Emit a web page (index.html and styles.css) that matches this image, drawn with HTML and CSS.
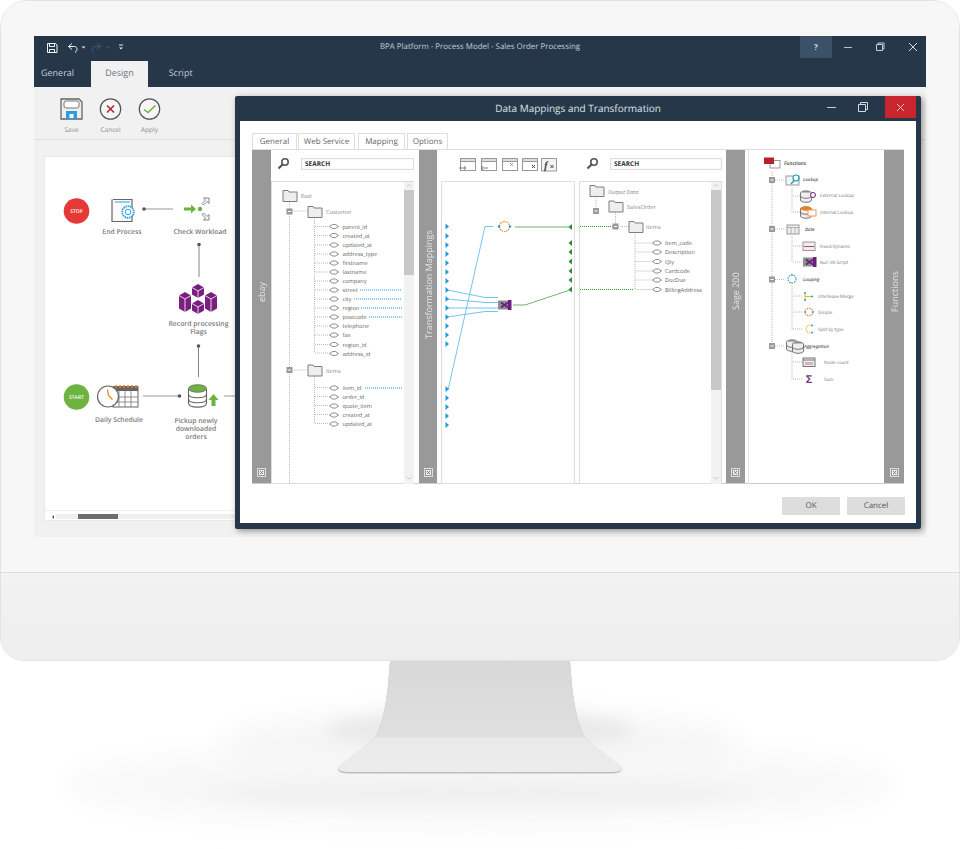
FILE: index.html
```html
<!DOCTYPE html>
<html lang="en">

<head>
    <meta charset="UTF-8">
    <meta name="viewport" content="width=device-width, initial-scale=1.0">
    <title>BPA Platform - Process Model</title>
    <link rel="stylesheet" href="styles.css">
</head>

<body>
    <!-- shared little icons -->
    <svg class="defs" aria-hidden="true">
        <defs>
            <g id="folder"><path d="M-7 -5.5h5l1 1.5h8v9.5h-14z" fill="#eee" stroke="#7d7d7d" /></g>
            <g id="leaf"><path d="M-4.5 0L-1.5 -2H1.5L4.5 0L1.5 2H-1.5Z" fill="#fff" stroke="#8a8a8a" /></g>
            <g id="minus"><rect x="-3" y="-3" width="6" height="6" fill="#999" /><path d="M-1.6 0H1.6" stroke="#fff" /></g>
            <polygon id="in" points="-1.5,-3 2,0 -1.5,3" fill="#1c9be0" />
            <polygon id="out" points="2,-3 -1.5,0 2,3" fill="#2e8b2e" />
            <g id="vb"><rect x="-7" y="-4.5" width="12" height="9" fill="#8f8f8f" /><path d="M-4 -2.5L3 2.5M-4 2.5L3 -2.5" stroke="#6c1f80" stroke-width="1.6" /><rect x="3" y="-5" width="3.5" height="10" fill="#6c1f80" /></g>
            <g id="cube"><path d="M0 -7L6 -3.5V3.5L0 7L-6 3.5V-3.5Z" fill="#7a1f80" /><path d="M-6 -3.5L0 0L6 -3.5M0 0V7" fill="none" stroke="#fff" stroke-width=".8" /></g>
            <g id="win"><rect x=".5" y=".5" width="15" height="12" fill="#fff" stroke="#999" /><rect x=".5" y=".5" width="15" height="3" fill="#ddd" stroke="#999" /></g>
            <g id="lens"><circle cx="2" cy="-2" r="3.2" fill="none" stroke="#555" stroke-width="1.6" /><path d="M0 0L-4.5 4.5" stroke="#555" stroke-width="2.2" /></g>
            <g id="db"><ellipse cx="0" cy="-3.5" rx="5.5" ry="2.2" fill="#8c8c8c" /><path d="M-5.5 -3.5V4c0 3 11 3 11 0V-3.5" fill="#eee" stroke="#777" /><path d="M-5.5 0c0 3 11 3 11 0" fill="none" stroke="#777" /></g>
            <g id="pin"><rect x=".5" y=".5" width="8" height="8" fill="none" stroke="#ddd" /><rect x="2" y="2" width="5" height="5" fill="#eee" /><path d="M3 3l3 3M6 3l-3 3" stroke="#666" stroke-width=".8" /></g>
        </defs>
    </svg>

    <div class="monitor">
        <div class="bezel">
            <div class="screen">
                <header class="titlebar">
                    <svg class="qat" width="100" height="25" viewBox="34 36 100 25">
                        <g fill="none" stroke="#f1f4f7">
                            <path d="M47.500 43.500h8l1.500 1.500v7.500h-9.500z" />
                            <path d="M49.500 43.500v3h5v-3M49.500 52.500v-3h5v3" />
                            <path d="M72 43.500l-3.500 3 3.500 3M68.500 46.500h6c3 0 3.500 4 0.500 6" />
                        </g>
                        <path d="M81.500 46.500h4l-2 2z" fill="#e6eaee" />
                        <path d="M97 43.500l3.500 3 -3.500 3M100.500 46.500h-6c-3 0 -3.500 4 -0.500 6" fill="none" stroke="#46586a" />
                        <path d="M105.500 46.500h4l-2 2z" fill="#46586a" />
                        <path d="M119 45h4" stroke="#e6eaee" /><path d="M119 47.500h4l-2 2z" fill="#e6eaee" />
                    </svg>
                    <div class="app-title">BPA Platform - Process Model - Sales Order Processing</div>
                    <div class="win-btns">
                        <div class="win-btn win-help">?</div>
                        <div class="win-btn"><svg width="10" height="10"><path d="M1 5.500h8" stroke="#b9c1c9" /></svg></div>
                        <div class="win-btn"><svg width="10" height="10"><path d="M1.500 2.500h6v6h-6zM3 2.500V1h6v6H7.500" fill="none" stroke="#c5ccd3" /></svg></div>
                        <div class="win-btn win-x"><svg width="10" height="10"><path d="M1 1l8 8M9 1l-8 8" stroke="#d5dae0" /></svg></div>
                    </div>
                </header>
                <nav class="app-tabs">
                    <div class="app-tab">General</div>
                    <div class="app-tab app-tab-on">Design</div>
                    <div class="app-tab app-tab-last">Script</div>
                </nav>
                <div class="toolbar">
                    <div class="tool">
                        <svg width="23" height="24" viewBox="0 0 23 24">
                            <path d="M1 2h18l3 3v17H1z" fill="#eee" stroke="#666" stroke-width="1.300" />
                            <rect x="4" y="4" width="15" height="7" rx="2" fill="#fff" stroke="#777" />
                            <rect x="6" y="14" width="11" height="8" fill="#2a9fe0" /><rect x="9.500" y="17" width="4" height="4" fill="#fff" />
                        </svg>
                        <span>Save</span>
                    </div>
                    <div class="tool">
                        <svg width="23" height="24" viewBox="0 0 23 24">
                            <circle cx="11.500" cy="12" r="10.200" fill="#f6f6f6" stroke="#555" stroke-width="1.200" />
                            <path d="M8 8.500l7 7M15 8.500l-7 7" stroke="#b5202a" stroke-width="1.500" />
                        </svg>
                        <span>Cancel</span>
                    </div>
                    <div class="tool">
                        <svg width="23" height="24" viewBox="0 0 23 24">
                            <circle cx="11.500" cy="12" r="10.200" fill="#f6f6f6" stroke="#555" stroke-width="1.200" />
                            <path d="M6 12.500l4 3l7.500 -7" fill="none" stroke="#6db33f" stroke-width="1.500" />
                        </svg>
                        <span>Apply</span>
                    </div>
                </div>
                <div class="canvas">
                    <!-- process diagram, drawn in screen coordinates -->
                    <svg class="diagram" width="866" height="352" viewBox="44 156 866 352">
                        <circle cx="75.500" cy="210" r="12.800" fill="#e53935" />
                        <text class="badge" x="75.500" y="212">STOP</text>

                        <path d="M112 198.500h19v22h-20v-22" fill="#fafafa" stroke="#666" stroke-width="1.200" />
                        <path d="M114 201h15" stroke="#2a9fe0" />
                        <circle cx="127" cy="211" r="5.800" fill="#fff" stroke="#2a9fe0" stroke-width="1.800" stroke-dasharray="1.500 .7" />
                        <circle cx="127" cy="211" r="2.800" fill="none" stroke="#2a9fe0" />
                        <text class="node" x="121" y="233">End Process</text>

                        <path d="M143 208H172" stroke="#999" />
                        <circle cx="143" cy="208" r="1.800" fill="#555" />
                        <path d="M183 206.500h7v-3l5 4.500l-5 4.500v-3h-7z" fill="#6db33f" />
                        <circle cx="199" cy="208" r="2.200" fill="#6db33f" />
                        <path d="M202.500 197H208V202.500L206 200.500L202.500 204L201 202.500L204.500 199ZM202.500 219H208V213.500L206 215.500L202.500 212L201 213.500L204.500 217Z" fill="#fff" stroke="#666" stroke-width=".8" />
                        <text class="node" x="199" y="233">Check Workload</text>

                        <path d="M198 243V276" stroke="#888" />
                        <circle cx="198" cy="243.500" r="1.800" fill="#555" />
                        <use href="#cube" x="197" y="306" />
                        <use href="#cube" x="184" y="304" />
                        <use href="#cube" x="210" y="304" />
                        <use href="#cube" x="184" y="298" />
                        <use href="#cube" x="210" y="298" />
                        <use href="#cube" x="197" y="290" />
                        <text class="node" x="197.500" y="324.500">Record processing</text>
                        <text class="node" x="197.500" y="333">Flags</text>

                        <path d="M197.500 345V376" stroke="#888" />
                        <circle cx="197.500" cy="345" r="1.800" fill="#555" />

                        <circle cx="75.500" cy="396" r="12.800" fill="#6db33f" />
                        <text class="badge" x="75.500" y="398">START</text>

                        <rect x="112" y="386" width="25" height="20" fill="#fff" stroke="#666" />
                        <rect x="112" y="385" width="25" height="5" fill="#666" />
                        <path d="M115 384v3M119 384v3M123 384v3M127 384v3M131 384v3M135 384v3" stroke="#ee7b22" stroke-width="1.500" />
                        <path d="M112 396h25M112 401h25M118 390v16M124 390v16M130 390v16" stroke="#777" stroke-width=".8" />
                        <circle cx="107" cy="395.500" r="10.500" fill="#fff" stroke="#666" stroke-width="1.200" />
                        <path d="M106.500 388.500l1 6l4 4" fill="none" stroke="#ee7b22" stroke-width="1.200" />
                        <text class="node" x="118" y="421">Daily Schedule</text>

                        <path d="M142 395H178" stroke="#999" />
                        <circle cx="178.500" cy="395" r="1.800" fill="#555" />
                        <path d="M187.500 388V402c0 5.500 18 5.500 18 0V388" fill="#fff" stroke="#666" stroke-width="1.100" />
                        <path d="M187.500 393c0 5 18 5 18 0M187.500 398c0 5 18 5 18 0" fill="none" stroke="#666" stroke-width="1.100" />
                        <ellipse cx="196.500" cy="387.500" rx="9" ry="3.800" fill="#6db33f" stroke="#666" stroke-width=".8" />
                        <path d="M212.500 393l5 6h-3v6h-4v-6h-3z" fill="#6db33f" />
                        <text class="node" x="195" y="422">Pickup newly</text>
                        <text class="node" x="195" y="430">downloaded</text>
                        <text class="node" x="195" y="438">orders</text>

                        <path d="M223 395H235" stroke="#999" />
                    </svg>
                    <div class="hscroll">
                        <div class="hscroll-arrow"></div>
                        <div class="hscroll-track">
                            <div class="hscroll-thumb"></div>
                        </div>
                    </div>
                </div>

                <!-- Data mappings dialog -->
                <div class="dialog">
                    <div class="dialog-top">
                        <div></div>
                        <div class="dialog-title">Data Mappings and Transformation</div>
                        <div class="dialog-btns">
                            <div class="dialog-btn"><svg width="10" height="10"><path d="M0 5.500h9" stroke="#c5ccd3" /></svg></div>
                            <div class="dialog-btn"><svg width="10" height="10"><path d="M.5 2.500h7v7h-7zM2.500 2.500V.5h7v7H7.500" fill="none" stroke="#d5dae0" /></svg></div>
                            <div class="dialog-btn dialog-close"><svg width="9" height="9"><path d="M1 1l7 7M8 1l-7 7" stroke="#f0c8ca" /></svg></div>
                        </div>
                    </div>
                    <div class="dialog-body">
                        <div class="dlg-tabs">
                            <div class="dlg-tab dlg-tab-general">General</div>
                            <div class="dlg-tab dlg-tab-web">Web Service</div>
                            <div class="dlg-tab dlg-tab-map">Mapping</div>
                            <div class="dlg-tab dlg-tab-opt">Options</div>
                        </div>
                        <div class="panel">
                            <div class="bar bar-a">
                                <div class="bar-label">ebay</div>
                                <svg class="bar-pin" width="9" height="9"><use href="#pin" /></svg>
                            </div>
                            <div class="pane pane-left">
                                <div class="search-row">
                                    <svg class="lens" width="14" height="14" viewBox="-6 -7 14 14"><use href="#lens" /></svg>
                                    <div class="search">SEARCH</div>
                                </div>
                                <svg class="list" width="143" height="303" viewBox="271 181 143 303">
                                    <rect x="404" y="182" width="10" height="302" fill="#f2f2f2" />
                                    <rect x="404" y="190" width="10" height="85" fill="#c8c8c8" />
                                    <path d="M406.500 186.500l2.500 -2l2.500 2M406.500 477l2.500 2l2.500 -2" fill="none" stroke="#ccc" />
                                    <path class="dots" d="M289.500 202V484M292.500 211H307M314.500 217V353M315 226.500H329M315 235.500H329M315 245H329M315 254H329M315 263H329M315 272H329M315 281H329M315 290H329M315 299H329M315 308H329M315 317H329M315 326H329M315 335H329M315 344.500H329M315 353H329M292.500 370H307M314.500 376V423M315 387.500H329M315 396.500H329M315 405.500H329M315 414.500H329M315 423.500H329" />
                                    <path class="dots-blue" d="M360 290H402M354 299H402M361 308H402M369 317H402M365 388H402" />
                                    <use href="#folder" x="290" y="196" />
                                    <text class="t-i" x="300.500" y="198">Root</text>
                                    <use href="#minus" x="289.500" y="211.500" />
                                    <use href="#folder" x="315" y="212" />
                                    <text class="t-f" x="326" y="214">Customer</text>
                                    <use href="#leaf" x="334" y="226.500" /><text class="t" x="342.500" y="229">parent_id</text>
                                    <use href="#leaf" x="334" y="235.500" /><text class="t" x="342.500" y="238">created_at</text>
                                    <use href="#leaf" x="334" y="245" /><text class="t" x="342.500" y="247">updated_at</text>
                                    <use href="#leaf" x="334" y="254" /><text class="t" x="342.500" y="256">address_type</text>
                                    <use href="#leaf" x="334" y="263" /><text class="t" x="342.500" y="265">firstname</text>
                                    <use href="#leaf" x="334" y="272" /><text class="t" x="342.500" y="274">lastname</text>
                                    <use href="#leaf" x="334" y="281" /><text class="t" x="342.500" y="283">company</text>
                                    <use href="#leaf" x="334" y="290" /><text class="t" x="342.500" y="292">street</text>
                                    <use href="#leaf" x="334" y="299" /><text class="t" x="342.500" y="301">city</text>
                                    <use href="#leaf" x="334" y="308" /><text class="t" x="342.500" y="310">region</text>
                                    <use href="#leaf" x="334" y="317" /><text class="t" x="342.500" y="319">postcode</text>
                                    <use href="#leaf" x="334" y="326" /><text class="t" x="342.500" y="328">telephone</text>
                                    <use href="#leaf" x="334" y="335" /><text class="t" x="342.500" y="337">fax</text>
                                    <use href="#leaf" x="334" y="344.500" /><text class="t" x="342.500" y="347">region_id</text>
                                    <use href="#leaf" x="334" y="353.500" /><text class="t" x="342.500" y="356">address_id</text>
                                    <use href="#minus" x="289.500" y="370" />
                                    <use href="#folder" x="315" y="370.500" />
                                    <text class="t-f" x="326" y="373">Items</text>
                                    <use href="#leaf" x="334" y="388" /><text class="t" x="342.500" y="389.500">item_id</text>
                                    <use href="#leaf" x="334" y="397" /><text class="t" x="342.500" y="398.500">order_id</text>
                                    <use href="#leaf" x="334" y="406" /><text class="t" x="342.500" y="407.500">quote_item</text>
                                    <use href="#leaf" x="334" y="415" /><text class="t" x="342.500" y="416.500">created_at</text>
                                    <use href="#leaf" x="334" y="424" /><text class="t" x="342.500" y="425.500">updated_at</text>
                                </svg>
                            </div>
                            <div class="bar bar-b">
                                <div class="bar-label bar-label-wide">Transformation Mappings</div>
                                <svg class="bar-pin" width="9" height="9"><use href="#pin" /></svg>
                            </div>
                            <div class="pane-mid">
                                <div class="pane pane-center">
                                    <svg class="tools" width="134" height="32" viewBox="441 149 134 32">
                                        <use href="#win" x="460" y="158" /><path d="M459 168h7l-2 -2M466 168l-2 2" fill="none" stroke="#666" stroke-width=".8" />
                                        <use href="#win" x="481" y="158" /><path d="M488 168h-7l2 -2M481 168l2 2" fill="none" stroke="#666" stroke-width=".8" />
                                        <use href="#win" x="502" y="158" /><path d="M510 163l3 3M513 163l-3 3" stroke="#888" stroke-width=".8" />
                                        <use href="#win" x="522" y="158" /><path d="M532 165l3 3M535 165l-3 3" stroke="#444" />
                                        <rect x="541.500" y="158.500" width="15" height="12.500" fill="#f4f4f4" stroke="#999" />
                                        <text class="fx" x="544" y="168.500">f</text>
                                        <path d="M550.500 165l3 3M553.500 165l-3 3" stroke="#444" />
                                    </svg>
                                    <svg class="list" width="134" height="303" viewBox="441 181 134 303">
                                        <g stroke-width=".8" fill="none">
                                            <path stroke="#55b4e8" d="M485 226.500H493M485 226.500L448 390M447 290L485 297.500H498M447 299L485 302.500H498M447 308H498M447 317L485 311.500H498" />
                                            <path stroke="#4a9e4a" d="M515 227H570M513 305H525L570 290" />
                                        </g>
                                        <circle cx="504.500" cy="226.500" r="5" fill="#fff" stroke="#ee7b22" stroke-width="1.200" stroke-dasharray="1.300 1" />
                                        <circle cx="499" cy="226.500" r="1.200" fill="#1c9be0" /><circle cx="510" cy="226.500" r="1.200" fill="#1c9be0" />
                                        <use href="#vb" x="505" y="305" />
                                        <use href="#in" x="447" y="226.500" /><use href="#in" x="447" y="236" /><use href="#in" x="447" y="245" /><use href="#in" x="447" y="254" /><use href="#in" x="447" y="263" /><use href="#in" x="447" y="272" /><use href="#in" x="447" y="281" /><use href="#in" x="447" y="290" /><use href="#in" x="447" y="299" /><use href="#in" x="447" y="308" /><use href="#in" x="447" y="317" /><use href="#in" x="447" y="326" /><use href="#in" x="447" y="335" /><use href="#in" x="447" y="344" />
                                        <use href="#in" x="447" y="389" /><use href="#in" x="447" y="398" /><use href="#in" x="447" y="407" /><use href="#in" x="447" y="416" /><use href="#in" x="447" y="425" />
                                        <use href="#out" x="570" y="227" /><use href="#out" x="570" y="243" /><use href="#out" x="570" y="252" /><use href="#out" x="570" y="261.500" /><use href="#out" x="570" y="271" /><use href="#out" x="570" y="280" /><use href="#out" x="570" y="289.500" />
                                    </svg>
                                </div>
                                <div class="pane pane-right">
                                    <div class="search-row search-row-right">
                                        <svg class="lens" width="14" height="14" viewBox="-6 -7 14 14"><use href="#lens" /></svg>
                                        <div class="search">SEARCH</div>
                                    </div>
                                    <svg class="list" width="143" height="303" viewBox="579 181 143 303">
                                        <rect x="711" y="182" width="10" height="302" fill="#f2f2f2" />
                                        <rect x="711" y="190" width="10" height="200" fill="#c8c8c8" />
                                        <path d="M713.500 186.500l2.500 -2l2.500 2M713.500 477l2.500 2l2.500 -2" fill="none" stroke="#ccc" />
                                        <path class="dots" d="M596 196V208M615.500 212V224M618 226.500H629M635 232V289.500M635.500 243H652M635.500 252H652M635.500 261.500H652M635.500 271H652M635.500 280H652M635.500 289.500H652" />
                                        <path class="dots-green" d="M580 226.500H613" />
                                        <path class="dots-green" d="M580 289.500H634" />
                                        <use href="#folder" x="597" y="191" />
                                        <text class="t-i" x="608" y="193.500">Output Data</text>
                                        <use href="#minus" x="596" y="211" />
                                        <use href="#folder" x="616" y="206.500" />
                                        <text class="t-f" x="627" y="209">SalesOrder</text>
                                        <use href="#minus" x="615.500" y="226.500" />
                                        <use href="#folder" x="636" y="227" />
                                        <text class="t-f" x="646" y="229">Items</text>
                                        <use href="#leaf" x="657" y="243" /><text class="t" x="665" y="245">Item_code</text>
                                        <use href="#leaf" x="657" y="252" /><text class="t" x="665" y="254">Description</text>
                                        <use href="#leaf" x="657" y="261.500" /><text class="t" x="665" y="264">Qty</text>
                                        <use href="#leaf" x="657" y="271" /><text class="t" x="665" y="273">Cardcode</text>
                                        <use href="#leaf" x="657" y="280" /><text class="t" x="665" y="282">DocDue</text>
                                        <use href="#leaf" x="657" y="289.500" /><text class="t" x="665" y="292">BillingAddress</text>
                                    </svg>
                                </div>
                            </div>
                            <div class="bar bar-a">
                                <div class="bar-label">Sage 200</div>
                                <svg class="bar-pin" width="9" height="9"><use href="#pin" /></svg>
                            </div>
                            <div class="pane pane-fn">
                                <svg width="134" height="334" viewBox="750 149 134 334">
                                    <path class="dots" d="M773 170V345M776 179H786M793 186V211M794 195H803M794 211H803M776 228H786M793 235V261M794 245H803M794 261H803M776 278.500H786M793 285V328M794 295H803M794 311H803M794 328H803M776 345H786M793 351V378M794 361H803M794 378H803" />

                                    <rect x="771" y="159.500" width="10" height="7.500" fill="#fff" stroke="#999" />
                                    <rect x="765" y="156.500" width="10" height="6.500" fill="#b5202a" />
                                    <text class="t-h" x="785" y="163.500">Functions</text>

                                    <use href="#minus" x="773" y="179" />
                                    <rect x="787" y="175" width="13" height="9" fill="#f4f4f4" stroke="#999" />
                                    <circle cx="797" cy="177" r="3" fill="#fff" stroke="#18a0b8" stroke-width="1.200" /><path d="M795 179.500L792 183" stroke="#18a0b8" stroke-width="1.200" />
                                    <text class="t-g" x="804" y="180">Lookup</text>

                                    <use href="#db" x="807" y="195" /><circle cx="814" cy="194" r="2.500" fill="#fff" stroke="#6c1f80" />
                                    <text class="t-s" x="821" y="196">External Lookup</text>
                                    <use href="#db" x="807" y="211" /><ellipse cx="807" cy="207.500" rx="5.500" ry="2.200" fill="#ee7b22" /><rect x="809" y="209" width="8" height="6" fill="#fff" stroke="#ee9a5a" />
                                    <text class="t-s" x="821" y="212.500">Internal Lookup</text>

                                    <use href="#minus" x="773" y="228" />
                                    <rect x="788" y="224" width="12" height="9" fill="#eee" stroke="#999" /><path d="M788 226.500h12M792 226.500v6M796 226.500v6" stroke="#999" stroke-width=".7" />
                                    <text class="t-g" x="806" y="229.500">Date</text>

                                    <rect x="804" y="241" width="12" height="8.500" fill="#eee" stroke="#999" /><path d="M805 245.500h10" stroke="#b5202a" stroke-width=".8" />
                                    <text class="t-s" x="821" y="246.500">Fixed/dynamic</text>
                                    <use href="#vb" x="811" y="261" />
                                    <text class="t-s" x="821" y="262.500">Run VB Script</text>

                                    <use href="#minus" x="773" y="278.500" />
                                    <circle cx="793" cy="278" r="4" fill="none" stroke="#2a9fe0" stroke-width="1.200" stroke-dasharray="1.500 1" />
                                    <circle cx="793" cy="274" r=".9" fill="#6db33f" /><circle cx="793" cy="282" r=".9" fill="#e8b820" />
                                    <text class="t-g" x="804" y="279.500">Looping</text>

                                    <path d="M806 292v7M806 295.500h7" stroke="#e8b820" /><circle cx="806" cy="292" r="1" fill="#2a9fe0" /><circle cx="806" cy="299" r="1" fill="#2a9fe0" /><circle cx="813" cy="295.500" r="1" fill="#2a9fe0" />
                                    <text class="t-s" x="819" y="296.500">Interleave Merge</text>
                                    <circle cx="810" cy="311" r="3.800" fill="none" stroke="#ee7b22" stroke-width="1.200" stroke-dasharray="1.300 .9" />
                                    <circle cx="806" cy="311" r=".9" fill="#2a9fe0" /><circle cx="814" cy="311" r=".9" fill="#2a9fe0" />
                                    <text class="t-s" x="819" y="312.500">Simple</text>
                                    <path d="M813 324.500a4 4 0 1 0 0 7" fill="none" stroke="#e8b820" stroke-width="1.200" stroke-dasharray="1.300 .9" />
                                    <circle cx="813" cy="324.500" r="1" fill="#2a9fe0" /><circle cx="813" cy="331.500" r="1" fill="#2a9fe0" />
                                    <text class="t-s" x="819" y="329.500">Split by type</text>

                                    <use href="#minus" x="773" y="345" />
                                    <use href="#db" x="793" y="344" /><use href="#db" x="799" y="346" />
                                    <text class="t-g" x="805" y="346.500">Aggregation</text>

                                    <rect x="804" y="357" width="12" height="8.500" fill="#eee" stroke="#777" /><path d="M804 359h12" stroke="#777" /><path d="M807 361v3M809 361v3M811 361v3M813 361v3" stroke="#b5202a" stroke-width=".6" />
                                    <text class="t-s" x="825" y="362.500">Node count</text>
                                    <text class="sigma" x="810" y="381.500">Σ</text>
                                    <text class="t-s" x="825" y="379.500">Sum</text>
                                </svg>
                            </div>
                            <div class="bar bar-c">
                                <div class="bar-label">Functions</div>
                                <svg class="bar-pin" width="9" height="9"><use href="#pin" /></svg>
                            </div>
                        </div>
                        <div class="dlg-foot">
                            <div class="btn">OK</div>
                            <div class="btn">Cancel</div>
                        </div>
                    </div>
                </div>
            </div>
        </div>
        <div class="chin"></div>
    </div>

    <svg class="stand" width="960" height="188" viewBox="0 661 960 188">
        <defs>
            <filter id="soft" x="-20%" y="-60%" width="140%" height="220%"><feGaussianBlur stdDeviation="14" /></filter>
            <filter id="softer" x="-30%" y="-80%" width="160%" height="260%"><feGaussianBlur stdDeviation="8" /></filter>
            <linearGradient id="neck" x1="0" y1="0" x2="0" y2="1">
                <stop offset="0" stop-color="#d8d8d8" />
                <stop offset=".68" stop-color="#dfdfdf" />
                <stop offset=".7" stop-color="#e9e9e9" />
                <stop offset="1" stop-color="#ececec" />
            </linearGradient>
        </defs>
        <ellipse cx="480" cy="785" rx="415" ry="42" fill="#f8f8f8" filter="url(#soft)" />
        <ellipse cx="480" cy="745" rx="260" ry="35" fill="#f5f5f5" filter="url(#soft)" />
        <ellipse cx="480" cy="793" rx="280" ry="16" fill="#f1f1f1" filter="url(#softer)" />
        <ellipse cx="480" cy="730" rx="155" ry="18" fill="#e9e9e9" filter="url(#softer)" />
        <path d="M390 662H570L572 685C574 705 578 725 585 738L621 767Q624 773.500 612 773.500H350Q335 773.500 338.500 767L375 738C382 725 386 705 388 685Z" fill="#bdbdbd" />
        <path d="M390 661H570L572 685C574 705 578 725 585 738L621 766Q624 772 612 772H350Q335 772 338.500 766L375 738C382 725 386 705 388 685Z" fill="url(#neck)" />
    </svg>
</body>

</html>
```

FILE: styles.css
```css
body {
    font-family: "Open Sans", "Liberation Sans", sans-serif;
    text-rendering: geometricPrecision;
    margin: 0;
    padding: 0;
    background-color: #fff;
    width: 960px;
    height: 849px;
    overflow: hidden;
}

.defs {
    position: absolute;
    width: 0;
    height: 0;
}

/* monitor body */
.monitor {
    width: 960px;
    box-sizing: border-box;
    border: 1px solid #e2e2e2;
    border-radius: 28px 28px 24px 24px;
    overflow: hidden;
}

.bezel {
    height: 572px;
    padding: 35px 33px 0;
    box-sizing: border-box;
    background-color: #f7f7f7;
    border-bottom: 1px solid #dcdcdc;
}

.chin {
    height: 87px;
    background: linear-gradient(#f2f2f2, #eeeeee);
}

.stand {
    display: block;
}

/* app window */
.screen {
    position: relative;
    width: 892px;
    height: 501px;
    background-color: #f1f1f1;
}

.titlebar {
    display: grid;
    grid-template-columns: 1fr auto 1fr;
    height: 25px;
    background-color: #26374a;
}

.qat {
    display: block;
}

.app-title {
    color: #c3ccd5;
    font-size: 7.9px;
    line-height: 22px;
}

.win-btns {
    display: flex;
    justify-content: flex-end;
}

.win-btn {
    display: flex;
    align-items: center;
    justify-content: center;
    width: 32px;
    height: 22px;
}

.win-x {
    width: 30px;
    box-sizing: border-box;
    padding-left: 3px;
}

.win-help {
    background-color: #3b5168;
    color: #cfd6dd;
    font-size: 8px;
    font-weight: bold;
}

.app-tabs {
    display: flex;
    gap: 17px;
    height: 26px;
    padding-left: 7px;
    background-color: #26374a;
}

.app-tab {
    color: #c3ccd5;
    font-size: 9px;
    line-height: 24px;
}

.app-tab-on {
    padding: 0 14px;
    background-color: #f1f1f1;
    color: #6b7680;
}

.app-tab-last {
    margin-left: 4px;
}

.toolbar {
    display: flex;
    height: 53px;
    box-sizing: border-box;
    padding: 10px 0 0 18px;
    border-bottom: 1px solid #e0e0e0;
}

.tool {
    display: flex;
    flex-direction: column;
    align-items: center;
    width: 39px;
    color: #8a8a8a;
    font-size: 6.5px;
}

.tool span {
    margin-top: 4px;
}

.canvas {
    margin: 16px 16px 0 10px;
    height: 365px;
    box-sizing: border-box;
    background-color: #fff;
    border: 1px solid #e8e8e8;
}

.diagram {
    display: block;
}

.node {
    font-size: 6.8px;
    font-weight: 600;
    fill: #7a7a7a;
    text-anchor: middle;
}

.badge {
    font-size: 5px;
    font-weight: 600;
    fill: #fff;
    text-anchor: middle;
}

.hscroll {
    display: flex;
    align-items: center;
    height: 11px;
    margin-top: 1px;
    border-top: 1px solid #eee;
}

.hscroll-arrow {
    width: 0;
    height: 0;
    margin: 0 2px 0 5px;
    border: 2px solid transparent;
    border-right-color: #555;
}

.hscroll-track {
    width: 200px;
    height: 5px;
    background-color: #eee;
}

.hscroll-thumb {
    width: 40px;
    height: 5px;
    margin-left: 22px;
    background-color: #6e6e6e;
}

/* mappings dialog */
.dialog {
    position: absolute;
    left: 201px;
    top: 60px;
    width: 686px;
    height: 433px;
    box-sizing: border-box;
    padding: 0 5px 6px;
    background-color: #26374a;
    border-radius: 2px;
    box-shadow: 2px 2px 6px rgba(0, 0, 0, 0.4);
}

.dialog-top {
    display: grid;
    grid-template-columns: 1fr auto 1fr;
    height: 25px;
}

.dialog-title {
    color: #dfe4e9;
    font-size: 10px;
    line-height: 25px;
}

.dialog-btns {
    display: flex;
    justify-content: flex-end;
    height: 22px;
}

.dialog-btn {
    display: flex;
    align-items: center;
    justify-content: center;
    width: 31px;
}

.dialog-close {
    margin-left: 7px;
    background-color: #c9252d;
}

.dialog-body {
    height: 402px;
    box-sizing: border-box;
    padding: 12px 11px 0 12px;
    background-color: #fff;
}

.dlg-tabs {
    display: flex;
    height: 16px;
}

.dlg-tab {
    box-sizing: border-box;
    color: #666;
    font-size: 8px;
    line-height: 15px;
    text-align: center;
    background-color: #fff;
    border: 1px solid #ddd;
    border-bottom: none;
}

.dlg-tab-general {
    width: 45px;
    margin-right: 1px;
}

.dlg-tab-web {
    width: 57px;
    margin-right: 3px;
}

.dlg-tab-map {
    width: 47px;
    margin-right: 2px;
}

.dlg-tab-opt {
    width: 41px;
}

.panel {
    display: flex;
    width: 652px;
    height: 335px;
    box-sizing: border-box;
    border-top: 1px solid #ddd;
    border-bottom: 1px solid #ccc;
}

.bar {
    display: flex;
    flex-direction: column;
    align-items: center;
    flex: none;
    background-color: #999;
}

.bar-a {
    width: 19px;
}

.bar-b {
    width: 18px;
}

.bar-c {
    width: 20px;
}

/* rotated 180deg, so the top padding is what sits under the label */
.bar-label {
    flex: 1;
    display: flex;
    align-items: center;
    justify-content: center;
    padding-top: 35px;
    color: #e4e4e4;
    font-size: 9px;
    writing-mode: vertical-rl;
    transform: rotate(180deg);
}

.bar-label-wide {
    padding-top: 49px;
}

.bar-pin {
    display: block;
    flex: none;
    margin-bottom: 6px;
}

.pane {
    flex: none;
}

.pane-left {
    width: 148px;
}

.pane-mid {
    display: flex;
    gap: 4px;
    flex: none;
    width: 289px;
    box-sizing: border-box;
    padding: 0 4px;
}

.pane-center {
    width: 134px;
}

.pane-right {
    width: 143px;
}

.pane-fn {
    width: 139px;
    box-sizing: border-box;
    padding-left: 4px;
}

.pane-fn svg {
    display: block;
    margin-left: -1px;
    border-left: 1px solid #e4e4e4;
}

.search-row {
    display: flex;
    align-items: center;
    box-sizing: border-box;
    height: 31px;
    padding: 0 0 3px 6px;
}

.search-row-right {
    padding-left: 7px;
}

.lens {
    flex: none;
}

.search {
    box-sizing: border-box;
    width: 113px;
    height: 12px;
    margin-left: 10px;
    padding-left: 3px;
    color: #333;
    font-size: 6.5px;
    font-weight: bold;
    line-height: 10px;
    border: 1px solid #ddd;
    box-shadow: inset 0 0 1px #ccc;
}

.tools {
    display: block;
    margin-top: -1px;
}

.list {
    display: block;
    box-shadow: inset 0 0 0 1px #ddd;
}

.dots {
    fill: none;
    stroke: #a8a8a8;
    stroke-width: .8;
    stroke-dasharray: 1 1;
}

.dots-blue {
    fill: none;
    stroke: #1c9be0;
    stroke-width: 1.2;
    stroke-dasharray: 1 1;
}

.dots-green {
    fill: none;
    stroke: #2aa52a;
    stroke-width: 1.2;
    stroke-dasharray: 1 1;
}

/* tree labels */
.t {
    font-size: 5.6px;
    fill: #5f5f5f;
}

.t-f {
    font-size: 5.6px;
    fill: #8a8a8a;
}

.t-i {
    font-size: 5.5px;
    font-style: italic;
    fill: #8a8a8a;
}

.t-h {
    font-size: 5px;
    font-style: italic;
    font-weight: 600;
    fill: #444;
}

.t-g {
    font-size: 4.5px;
    font-style: italic;
    font-weight: 600;
    fill: #555;
}

.t-s {
    font-size: 4.5px;
    fill: #777;
}

.fx {
    font-family: "Liberation Serif", serif;
    font-size: 11px;
    font-style: italic;
    font-weight: bold;
    fill: #444;
}

.sigma {
    font-size: 11px;
    font-weight: bold;
    fill: #6c3a85;
    text-anchor: middle;
}

.dlg-foot {
    display: flex;
    justify-content: flex-end;
    gap: 7px;
    padding-top: 13px;
}

.btn {
    width: 58px;
    height: 18px;
    color: #555;
    font-size: 8px;
    line-height: 18px;
    text-align: center;
    background-color: #ddd;
}
```
